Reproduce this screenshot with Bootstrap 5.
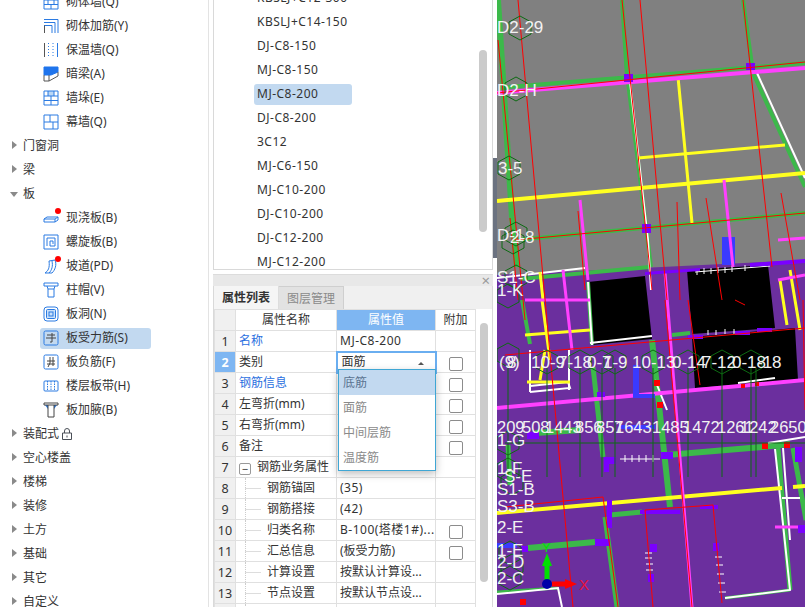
<!DOCTYPE html>
<html lang="zh-Hans">
<head>
<meta charset="UTF-8">
<title>板受力筋</title>
<link href="https://cdn.jsdelivr.net/npm/bootstrap@5.3.3/dist/css/bootstrap.min.css" rel="stylesheet">
<style>
html, body { height: 607px; overflow: hidden; }
body { font: 12px/1.2 "Noto Sans", "Noto Sans CJK SC", sans-serif; color: #333; background: #fff; }
.app-frame { width: 805px; height: 607px; }
.side-tree { width: 209px; border-right: 1px solid #e3e3e3; margin-right: 4px; overflow: hidden; padding-top: 1px; }
.side-tree ul { margin: -11px 0 0; padding: 0; list-style: none; }
.tree-top, .tree-sub { height: 24px; display: flex; align-items: center; }
.tree-top { padding-left: 23px; position: relative; }
.tree-top::before { content: ""; position: absolute; left: 12px; top: 7px; border-style: solid; border-width: 4.5px 0 4.5px 5px; border-color: transparent transparent transparent #8a8a8a; }
.tree-top.is-open::before { left: 10px; top: 10px; border-width: 5px 4px 0; border-color: #8a8a8a transparent transparent; }
.tree-sub { margin-left: 40px; width: 111px; padding-left: 3px; gap: 7px; position: relative; }
.tree-sub.is-active::before { content: ""; position: absolute; inset: 2px 0 1px; background: #c2d9f0; border-radius: 3px; z-index: -1; }
.tree-sub svg { width: 16px; height: 16px; flex: none; fill: none; stroke: #2a7ae2; stroke-width: 1; }
.red-dot { position: absolute; left: 15px; top: 2px; width: 6px; height: 6px; border-radius: 50%; background: #f00; }
.lock-mark { width: 10px; height: 12px; margin-left: 3px; fill: none; stroke: #4a4f57; }
.mid-col { width: 280px; }
.bar-list { height: 270px; border: 1px solid #d9d9d9; border-top: 0; overflow: hidden; letter-spacing: .5px; }
.bar-list ul { margin: -14px 0 0; padding: 0 0 0 40px; list-style: none; flex: 1; }
.bar-list li { height: 24px; display: flex; align-items: center; width: 98px; padding-left: 3px; border-radius: 3px; white-space: nowrap; }
.bar-list li.is-active { background: #c2d9f0; height: 21px; margin: 1.5px 0; }
.scroll-track { width: 17px; flex: none; }
.scroll-thumb { width: 8px; margin-left: 4px; background: #cbcbcb; border-radius: 4px; }
.dock-head { height: 12px; margin-top: 4px; background: #e8e8e8; color: #9a9a9a; font-size: 15px; line-height: 10px; text-align: right; padding-right: 3px; border-top: 1px solid #dcdcdc; }
.dock-tabs { height: 23px; background: #f0f0f0; border-left: 1px solid #d9d9d9; border-right: 1px solid #d9d9d9; }
.dock-tab { width: 65px; text-align: center; line-height: 23px; }
.dock-tab.on { background: #f5f5f5; font-weight: 700; border-right: 1px solid #ddd; }
.dock-tab.off { background: #e2e2e2; color: #8a8a8a; border-right: 1px solid #cfcfcf; border-top: 1px solid #cfcfcf; }
.dock-body { flex: 1; min-height: 0; border-left: 1px solid #d9d9d9; border-right: 1px solid #d9d9d9; overflow: hidden; position: relative; }
.prop-grid { width: 261px; margin: 0; table-layout: fixed; border-collapse: collapse; font-size: 12px; color: #333; }
.prop-grid td, .prop-grid th { height: 21px; padding: 0 3px; border: 1px solid #e0e0e0; font-weight: 400; white-space: nowrap; overflow: hidden; vertical-align: middle; background: #fff; color: #333; }
.prop-grid td:nth-child(2) { padding-left: 3px; }
.prop-grid tr > :first-child { text-align: center; background: #f0f0f0; padding: 0; font-size: 12.5px; }
.prop-grid th { text-align: center; }
.prop-grid th.is-hot { background: #7eb6f2; color: #fff; }
.prop-grid td.row-hot { background: #7eb6f2; color: #fff; font-weight: 700; }
.prop-grid td.val-edit { border: 2px solid #6aaef0; padding: 0 4px; }
.prop-grid td.lat-val { letter-spacing: .5px; }
.prop-grid td.blue-name { color: #2a6fe0; }
.prop-grid td.has-box { text-align: center; padding: 0; }
.prop-grid .form-check-input { width: 14px; height: 14px; margin: 3px 0 0; border: 1px solid #8c8c8c; border-radius: 2px; }
.prop-grid td.child-name { padding-left: 31px; position: relative; }
.child-name::before { content: ""; position: absolute; left: 9px; top: 0; bottom: 0; border-left: 1px dotted #ccc; }
.child-name::after { content: ""; position: absolute; left: 9px; top: 10px; width: 16px; border-top: 1px solid #ddd; }
.fold-box { display: inline-block; width: 12px; height: 12px; border: 1px solid #999; border-radius: 2px; line-height: 9px; text-align: center; margin: 0 6px 0 0; font-size: 11px; vertical-align: -2px; }
.up-caret { float: right; margin: 7px 7px 0 0; border-style: solid; border-width: 0 3px 3px; border-color: transparent transparent #555; }
.kind-menu { display: block; position: absolute; left: 124px; top: 60px; width: 98px; min-width: 0; padding: 0; margin: 0; border: 1px solid #3fa6d4; border-radius: 0; font-size: 12px; box-shadow: 0 3px 8px rgba(0,0,0,.25); }
.kind-menu .dropdown-item { height: 25px; padding: 0 4px; line-height: 25px; color: #8a8a8a; }
.kind-menu .dropdown-item.active { background: #c2d9f0; color: #5a7391; }
.split-bar { width: 4px; }
.split-bar i { display: block; margin-top: 158px; height: 100px; background: #6b7280; }
.cad-view { width: 308px; height: 607px; background: #6b2f9e; display: block; }
.cad-view text { font: 17px "Liberation Sans", sans-serif; fill: #f2f2f2; }
.cad-view .sm { font-size: 16.5px; }
</style>
</head>
<body>
<svg width="0" height="0" class="position-absolute">
  <symbol id="i-wall" viewBox="0 0 16 16"><path d="M1 1h14v14H1zM1 6h14M1 10.500h14M8 1v5M5 6v4.500M11 6v4.500M8 10.500V15"/></symbol>
  <symbol id="i-rebar" viewBox="0 0 16 16"><path d="M1 1.500h14V15M1 4.500h11V15M1 7.500h8V15"/><path stroke="#555" d="M1.500 7.500V15"/></symbol>
  <symbol id="i-insul" viewBox="0 0 16 16"><path stroke="#555" d="M1.500 1v14"/><path d="M14.500 1v14"/><path stroke-dasharray="1 2" d="M5.500 1v14M10 1v14"/></symbol>
  <symbol id="i-beam" viewBox="0 0 16 16"><path fill="#1f74ec" stroke="#1f74ec" d="M1 1h14v5L8 9H1z"/><path stroke="#555" d="M1 9v6h5l9-5V6M6 9v6"/></symbol>
  <symbol id="i-pier" viewBox="0 0 16 16"><path fill="#b9d6f6" stroke="none" d="M5 1h6v5H5z"/><path d="M1 1h14v14H1zM1 6h14M1 10.500h14M5 1v5M11 1v5M8 6v4.500M8 10.500V15"/></symbol>
  <symbol id="i-curtain" viewBox="0 0 16 16"><path d="M1 1h14v14H1zM1 8h14M7 1v7M10 8v7"/></symbol>
  <symbol id="i-slab" viewBox="0 0 16 16"><path d="M1 9l3-2h11v3l-3 2H1zM1 9h11l3-2M12 9v3"/></symbol>
  <symbol id="i-spiral" viewBox="0 0 16 16"><path d="M1 1h14v14H1z"/><path d="M4 12V4h8v8H7V7h3v3"/></symbol>
  <symbol id="i-ramp" viewBox="0 0 16 16"><path d="M2 15c3-2 5-5 4-12l6-1c2 5 0 10-3 13z"/><path d="M6 15c3-3 4-7 3-12"/></symbol>
  <symbol id="i-cap" viewBox="0 0 16 16"><path d="M1 1h14v3H1zM4 4l1 3h6l1-3M5 7v8h6V7"/></symbol>
  <symbol id="i-hole" viewBox="0 0 16 16"><rect x="1" y="1" width="14" height="14" rx="3"/><rect x="3.500" y="3.500" width="9" height="9" rx="1" fill="#c9e0fa"/><rect x="6" y="6" width="4" height="4"/></symbol>
  <symbol id="i-main" viewBox="0 0 16 16"><rect x="1" y="1" width="14" height="14" rx="1.500"/><path stroke="#444" d="M3 8h10M4 5h8M9 3v9H7"/></symbol>
  <symbol id="i-neg" viewBox="0 0 16 16"><rect x="1" y="1" width="14" height="14" rx="1.500"/><path stroke="#444" d="M4 7h8M4 10h8M7 3v6l-2 4M10 3v9"/></symbol>
  <symbol id="i-band" viewBox="0 0 16 16"><rect x="1" y="3" width="14" height="10" rx="1"/><path stroke-dasharray="1.500 1" d="M4.500 3v10M8 3v10M11.500 3v10"/></symbol>
  <symbol id="i-haunch" viewBox="0 0 16 16"><path fill="#2a7ae2" stroke="none" d="M2 3h3v4zM11 3h3l-3 4z"/><path stroke="#444" d="M1 1h14v2H1zM5 3v12h6V3"/></symbol>
</svg>

<div class="app-frame d-flex">
  <aside class="side-tree flex-none">
    <ul>
      <li class="tree-sub"><svg><use href="#i-wall"/></svg>砌体墙(Q)</li>
      <li class="tree-sub"><svg><use href="#i-rebar"/></svg>砌体加筋(Y)</li>
      <li class="tree-sub"><svg><use href="#i-insul"/></svg>保温墙(Q)</li>
      <li class="tree-sub"><svg><use href="#i-beam"/></svg>暗梁(A)</li>
      <li class="tree-sub"><svg><use href="#i-pier"/></svg>墙垛(E)</li>
      <li class="tree-sub"><svg><use href="#i-curtain"/></svg>幕墙(Q)</li>
      <li class="tree-top">门窗洞</li>
      <li class="tree-top">梁</li>
      <li class="tree-top is-open">板</li>
      <li class="tree-sub"><svg><use href="#i-slab"/></svg><span class="red-dot"></span>现浇板(B)</li>
      <li class="tree-sub"><svg><use href="#i-spiral"/></svg>螺旋板(B)</li>
      <li class="tree-sub"><svg><use href="#i-ramp"/></svg><span class="red-dot"></span>坡道(PD)</li>
      <li class="tree-sub"><svg><use href="#i-cap"/></svg>柱帽(V)</li>
      <li class="tree-sub"><svg><use href="#i-hole"/></svg>板洞(N)</li>
      <li class="tree-sub is-active"><svg><use href="#i-main"/></svg>板受力筋(S)</li>
      <li class="tree-sub"><svg><use href="#i-neg"/></svg>板负筋(F)</li>
      <li class="tree-sub"><svg><use href="#i-band"/></svg>楼层板带(H)</li>
      <li class="tree-sub"><svg><use href="#i-haunch"/></svg>板加腋(B)</li>
      <li class="tree-top">装配式<svg class="lock-mark" viewBox="0 0 10 12"><path d="M.5 5h9v6.500h-9zM2.500 5V3a2.500 2.500 0 0 1 5 0v2M5 7.500v2"/></svg></li>
      <li class="tree-top">空心楼盖</li>
      <li class="tree-top">楼梯</li>
      <li class="tree-top">装修</li>
      <li class="tree-top">土方</li>
      <li class="tree-top">基础</li>
      <li class="tree-top">其它</li>
      <li class="tree-top">自定义</li>
    </ul>
  </aside>

  <main class="mid-col d-flex flex-column">
    <section class="bar-list d-flex">
      <ul>
        <li>KBSLJ+C12-300</li>
        <li>KBSLJ+C14-150</li>
        <li>DJ-C8-150</li>
        <li>MJ-C8-150</li>
        <li class="is-active">MJ-C8-200</li>
        <li>DJ-C8-200</li>
        <li>3C12</li>
        <li>MJ-C6-150</li>
        <li>MJ-C10-200</li>
        <li>DJ-C10-200</li>
        <li>DJ-C12-200</li>
        <li>MJ-C12-200</li>
      </ul>
      <div class="scroll-track"><div class="scroll-thumb" style="margin-top:50px;height:182px"></div></div>
    </section>

    <div class="dock-head">×</div>
    <div class="dock-tabs d-flex">
      <div class="dock-tab on">属性列表</div>
      <div class="dock-tab off">图层管理</div>
    </div>
    <section class="dock-body d-flex">
      <table class="prop-grid">
        <colgroup><col style="width:21px"><col style="width:101px"><col style="width:99px"><col style="width:40px"></colgroup>
        <tr><th></th><th>属性名称</th><th class="is-hot">属性值</th><th>附加</th></tr>
        <tr><td>1</td><td class="blue-name">名称</td><td class="lat-val">MJ-C8-200</td><td></td></tr>
        <tr><td class="row-hot">2</td><td>类别</td><td class="val-edit">面筋<span class="up-caret"></span></td><td class="has-box"><input class="form-check-input" type="checkbox"></td></tr>
        <tr><td>3</td><td class="blue-name">钢筋信息</td><td></td><td class="has-box"><input class="form-check-input" type="checkbox"></td></tr>
        <tr><td>4</td><td>左弯折(mm)</td><td></td><td class="has-box"><input class="form-check-input" type="checkbox"></td></tr>
        <tr><td>5</td><td>右弯折(mm)</td><td></td><td class="has-box"><input class="form-check-input" type="checkbox"></td></tr>
        <tr><td>6</td><td>备注</td><td></td><td class="has-box"><input class="form-check-input" type="checkbox"></td></tr>
        <tr><td>7</td><td><span class="fold-box">−</span>钢筋业务属性</td><td></td><td></td></tr>
        <tr><td>8</td><td class="child-name">钢筋锚固</td><td class="lat-val">(35)</td><td></td></tr>
        <tr><td>9</td><td class="child-name">钢筋搭接</td><td class="lat-val">(42)</td><td></td></tr>
        <tr><td>10</td><td class="child-name">归类名称</td><td class="lat-val">B-100(塔楼1#)...</td><td class="has-box"><input class="form-check-input" type="checkbox"></td></tr>
        <tr><td>11</td><td class="child-name">汇总信息</td><td>(板受力筋)</td><td class="has-box"><input class="form-check-input" type="checkbox"></td></tr>
        <tr><td>12</td><td class="child-name">计算设置</td><td>按默认计算设...</td><td></td></tr>
        <tr><td>13</td><td class="child-name">节点设置</td><td>按默认节点设...</td><td></td></tr>
        <tr><td></td><td class="child-name"></td><td></td><td></td></tr>
      </table>
      <div class="scroll-track ms-auto"><div class="scroll-thumb" style="margin-top:14px;height:259px"></div></div>
      <div class="dropdown-menu kind-menu">
        <a class="dropdown-item active" href="#">底筋</a>
        <a class="dropdown-item" href="#">面筋</a>
        <a class="dropdown-item" href="#">中间层筋</a>
        <a class="dropdown-item" href="#">温度筋</a>
      </div>
    </section>
  </main>

  <div class="split-bar"><i></i></div>

  <svg class="cad-view" viewBox="497 0 308 607" fill="none">
    <defs>
      <polygon id="hexa" points="0,-12 11,-6 11,6 0,12 -11,6 -11,-6" stroke="#0d6b12"/>
    </defs>
    <!-- 底色 -->
    <path fill="#808080" d="M497 0H805V260L497 275z"/>
    <path fill="#000" d="M588 282L645 276L652 339L592 345zM687 270L768 265L775 328L692 334zM692 337L795 328L798 380L695 388z"/>
    <path fill="#3a3aff" d="M722 237h13v28h-13z"/>

    <!-- 梁 绿 -->
    <g stroke="#3cb94a" stroke-width="5">
      <path stroke-width="6" d="M498 0L512 217L517 267"/>
      <path stroke-width="4" d="M622 0L627 77M743 0L752 65M753 73L805 187M508 87L805 63M515 240L805 213M520 279L650 267"/>
      <path stroke-width="4" d="M628 82L651 267M522 300L530 344M588 282L592 345"/>
      <path d="M593 367L603 457M508 445L510 485M610 515L642 512"/>
      <path stroke-width="6" d="M652 340L670 507M667 455L762 447M762 447L790 444M528 548L595 542"/>
      <path d="M605 517L617 607M778 448L790 590M793 448L806 520"/>
      <path stroke-width="6" d="M535 433L580 430"/>
      <path stroke-width="4" d="M672 335L690 333"/>
      <path stroke-width="3" d="M725 598L790 590M497 592L558 588"/>
    </g>
    <!-- 白线 -->
    <g stroke="#fff" stroke-width="2">
      <path d="M630 82L648 240L651 290M757 73L805 178M497 278L585 268M590 343L652 336M588 282L592 345"/>
      <path d="M775 449L790 590L725 598M783 448L790 540M782 498H800M497 594L558 588L562 607"/>
      <path d="M530 386L568 382L570 388L530 392M530 350V392M569 350V390M738 383L775 378M768 443L805 437M655 380L667 410"/>
    </g>
    <g stroke="#fff" stroke-width="1">
      <path d="M695 272L770 266M697 269v6M704 268v6M711 268v6M718 267v6M725 267v6M732 266v6M745 265v6"/>
      <path d="M620 459H660M625 455v7M632 455v7M639 455v7M646 455v7M653 455v7"/>
      <path d="M708 330v5M716 330v5M725 329v5M734 329v5M645 553h7M645 558h7M646 564h7M646 570h7M715 557h7M716 565h7M717 574h7M718 583h7M719 592h7"/>
    </g>
    <!-- 黄线 -->
    <g stroke="#ffff20" stroke-width="3">
      <path d="M678 77L692 223M638 158L785 145"/>
      <path stroke-width="4" d="M497 201L805 173M497 513L782 488M793 487L805 486"/>
      <path d="M540 272L543 300M525 335L590 330M542 300L550 360M540 380L545 350M527 382H570M790 270L800 330M780 280L787 325"/>
    </g>
    <!-- 粉线 -->
    <g stroke="#ff40ff" stroke-width="3">
      <path stroke-width="4" d="M497 93L805 68M497 408L805 380"/>
      <path d="M580 200L588 280M724 180L733 267M563 270L572 350M665 272L692 607M525 300H590M778 240L805 238M778 280L805 275M775 527H805"/>
    </g>
    <!-- 紫色方块 -->
    <path fill="#7a00ff" d="M624 74h9v8h-9zM746 63h9v7h-9zM642 224h9v9h-9zM645 272l55-4v3l-55 4zM750 263l55-4v4l-55 4zM688 335h15v4h-15zM735 331h15v4h-15zM757 328h15v4h-15zM527 432h12v7h-12zM597 392h8v5h-8zM604 457h12v7h-12zM604 464h5v8h-5zM661 452h12v7h-12zM640 510h40v4h-40zM700 505h18v4h-18zM607 500h5v28h-5zM595 539h15v7h-15zM520 546h8v6h-8zM650 544h7v8h-7zM713 543h6v8h-6zM648 574h6v8h-6zM798 525h7v8h-7zM795 447h7v15h-7z"/>
    <path fill="#3a3aff" d="M497 543h20v5h-20zM633 365h6v30h-6zM633 394h22v4h-22zM620 425h35v4h-35z"/>
    <!-- 红线 -->
    <g stroke="#f00" stroke-width="1">
      <path d="M518 0L543 277L573 607M498 40L525 320M640 0L667 300M622 0L652 290M743 0L772 267M706 198L722 300M781 193L800 300M677 202L680 300M578 211L585 290M510 218L518 300"/>
      <path d="M515 240L805 213M497 93L805 62M505 507L603 497L618 607M645 510L653 607M645 510L713 505L722 603M505 355L805 328M735 300L745 305M688 300L700 385M803 300L805 410M665 300L692 607"/>
    </g>
    <path fill="#f00" d="M654 380h6v6h-6zM657 402h6v6h-6zM741 384h4v4h-4zM755 382h4v4h-4zM762 443h6v6h-6zM784 442h6v6h-6zM520 599h6v6h-6z"/>

    <!-- 轴线 -->
    <g stroke="#0d6b12">
      <path d="M508 368V477M547 368V477M580 368V477M602 368V477M615 368V477M653 368V477M688 368V477M722 368V477M751 368V477M756 368V477M505 443H805"/>
    </g>
    <use href="#hexa" x="520" y="28"/><use href="#hexa" x="516" y="89"/><use href="#hexa" x="509" y="168"/>
    <use href="#hexa" x="516" y="234"/><use href="#hexa" x="513" y="242"/><use href="#hexa" x="516" y="277"/><use href="#hexa" x="508" y="296"/>
    <use href="#hexa" x="508" y="355"/><use href="#hexa" x="547" y="362"/><use href="#hexa" x="580" y="362"/><use href="#hexa" x="602" y="362"/><use href="#hexa" x="615" y="362"/>
    <use href="#hexa" x="653" y="362"/><use href="#hexa" x="688" y="362"/><use href="#hexa" x="722" y="362"/><use href="#hexa" x="751" y="362"/>
    <use href="#hexa" x="508" y="443"/><use href="#hexa" x="508" y="470"/><use href="#hexa" x="512" y="483"/><use href="#hexa" x="510" y="553"/><use href="#hexa" x="512" y="566"/><use href="#hexa" x="510" y="578"/>

    <!-- 轴号 -->
    <text x="497" y="33">D2-29</text><text x="497" y="96">D2-H</text><text x="498" y="174">3-5</text>
    <text x="497" y="241">D-1</text><text x="510" y="243">2-8</text><text x="497" y="283">S1-C</text><text x="497" y="296">1-K</text>
    <text x="499" y="368">(9)</text><text x="507" y="368">8</text><text x="531" y="368">10-9</text><text x="558" y="368">7-18</text><text x="587" y="368">0-7</text><text x="603" y="368">1-9</text><text x="632" y="368">10-13</text><text x="672" y="368">0-14</text><text x="702" y="368">7-12</text><text x="732" y="368">0-18</text><text x="757" y="368">-18</text>
    <text class="sm" x="497" y="433">209</text><text class="sm" x="522" y="433">508</text><text class="sm" x="545" y="433">1443</text><text class="sm" x="575" y="433">856</text><text class="sm" x="596" y="433">857</text><text class="sm" x="615" y="433">1643</text><text class="sm" x="652" y="433">1485</text><text class="sm" x="683" y="433">1472</text><text class="sm" x="717" y="433">1261</text><text class="sm" x="740" y="433">1242</text><text class="sm" x="770" y="433">2650</text>
    <text x="497" y="446">1-G</text><text x="497" y="474">1-F</text><text x="504" y="482">S-E</text><text x="497" y="495">S1-B</text><text x="497" y="512">S3-B</text><text x="497" y="533">2-E</text><text x="497" y="556">1-E</text><text x="497" y="568">2-D</text><text x="497" y="584">2-C</text>

    <!-- 坐标轴 -->
    <path stroke="#00e000" stroke-width="5" d="M547 584V565"/><path fill="#00e000" d="M547 553l5 13h-10z"/>
    <path stroke="#f00" stroke-width="5" d="M552 584H568"/><path fill="#f00" d="M577 584l-12-5v10z"/>
    <circle cx="547" cy="584" r="5" fill="#0000a8"/>
    <text x="542" y="552" style="fill:#00e000;font-size:13px">Y</text>
    <text x="579" y="590" style="fill:#e8123c;font-size:15px">X</text>
  </svg>
</div>
<script src="https://cdn.jsdelivr.net/npm/bootstrap@5.3.3/dist/js/bootstrap.bundle.min.js"></script>
</body>
</html>
